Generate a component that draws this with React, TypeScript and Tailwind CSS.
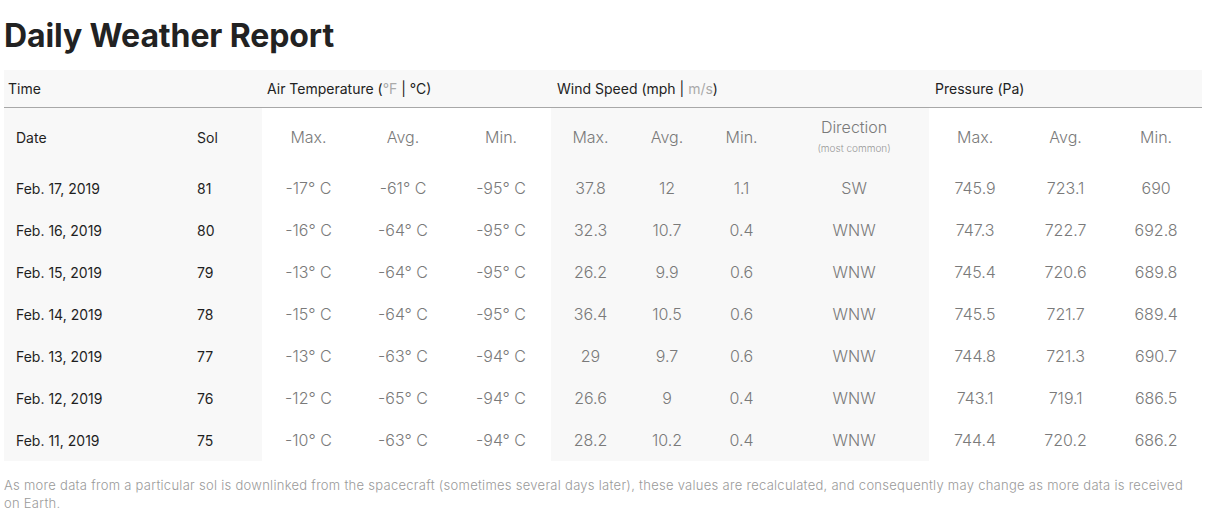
import React from "react";

const rows = [
  ["Feb. 17, 2019", "81", "-17", "-61", "-95", "37.8", "12", "1.1", "SW", "745.9", "723.1", "690"],
  ["Feb. 16, 2019", "80", "-16", "-64", "-95", "32.3", "10.7", "0.4", "WNW", "747.3", "722.7", "692.8"],
  ["Feb. 15, 2019", "79", "-13", "-64", "-95", "26.2", "9.9", "0.6", "WNW", "745.4", "720.6", "689.8"],
  ["Feb. 14, 2019", "78", "-15", "-64", "-95", "36.4", "10.5", "0.6", "WNW", "745.5", "721.7", "689.4"],
  ["Feb. 13, 2019", "77", "-13", "-63", "-94", "29", "9.7", "0.6", "WNW", "744.8", "721.3", "690.7"],
  ["Feb. 12, 2019", "76", "-12", "-65", "-94", "26.6", "9", "0.4", "WNW", "743.1", "719.1", "686.5"],
  ["Feb. 11, 2019", "75", "-10", "-63", "-94", "28.2", "10.2", "0.4", "WNW", "744.4", "720.2", "686.2"],
];

const gray = "bg-[#f8f8f8]";
const val = "text-center font-light text-[16px] text-[#7a7a7a]";
const lab = "pl-[12px] text-[14px] font-normal text-[#1f1f1f]";

export default function App() {
  return (
    <div className="w-[1205px] h-[532px] bg-white px-1 pt-[14px] text-[#222]" style={{ fontFamily: "Inter, 'Noto Sans', sans-serif" }}>
      <h1 className="text-[32px] leading-[44px] font-bold tracking-[-0.1px] text-[#222] mb-[12px]">Daily Weather Report</h1>
      <table className="w-[1198px] table-fixed border-collapse">
        <colgroup>
          <col className="w-[181px]" />
          <col className="w-[77px]" />
          <col className="w-[93px]" />
          <col className="w-[96px]" />
          <col className="w-[100px]" />
          <col className="w-[79px]" />
          <col className="w-[74px]" />
          <col className="w-[75px]" />
          <col className="w-[150px]" />
          <col className="w-[92px]" />
          <col className="w-[89px]" />
          <col className="w-[92px]" />
        </colgroup>
        <thead>
          <tr className={`${gray} h-[37px] border-b border-[#a8a8a8] text-[14px] text-[#222]`}>
            <th colSpan={2} className="text-left font-normal pl-[4px]">Time</th>
            <th colSpan={3} className="text-left font-normal pl-[5px]">
              Air Temperature (<span className="text-[#aaa]">°F</span> | °C)
            </th>
            <th colSpan={4} className="text-left font-normal pl-[6px]">
              Wind Speed (mph | <span className="text-[#aaa]">m/s</span>)
            </th>
            <th colSpan={3} className="text-left font-normal pl-[6px]">Pressure (Pa)</th>
          </tr>
        </thead>
        <tbody>
          <tr className="h-[60px]">
            <td className={`${gray} ${lab}`}>Date</td>
            <td className={`${gray} ${lab}`}>Sol</td>
            <td className={val}>Max.</td>
            <td className={val}>Avg.</td>
            <td className={val}>Min.</td>
            <td className={`${gray} ${val}`}>Max.</td>
            <td className={`${gray} ${val}`}>Avg.</td>
            <td className={`${gray} ${val}`}>Min.</td>
            <td className={`${gray} text-center font-light text-[#7a7a7a]`}>
              <div className="text-[16px] leading-[20px] mt-[2px]">Direction</div>
              <div className="text-[10px] leading-[22px] text-[#999]">(most common)</div>
            </td>
            <td className={val}>Max.</td>
            <td className={val}>Avg.</td>
            <td className={val}>Min.</td>
          </tr>
          {rows.map((r) => (
            <tr key={r[0]} className="h-[42px]">
              <td className={`${gray} ${lab}`}>{r[0]}</td>
              <td className={`${gray} ${lab}`}>{r[1]}</td>
              <td className={val}>{r[2]}° C</td>
              <td className={val}>{r[3]}° C</td>
              <td className={val}>{r[4]}° C</td>
              <td className={`${gray} ${val}`}>{r[5]}</td>
              <td className={`${gray} ${val}`}>{r[6]}</td>
              <td className={`${gray} ${val}`}>{r[7]}</td>
              <td className={`${gray} ${val}`}>{r[8]}</td>
              <td className={val}>{r[9]}</td>
              <td className={val}>{r[10]}</td>
              <td className={val}>{r[11]}</td>
            </tr>
          ))}
        </tbody>
      </table>
      <p className="mt-[15px] text-[13px] leading-[18px] font-light tracking-[0.28px] text-[#9a9a9a] w-[1190px]">
        As more data from a particular sol is downlinked from the spacecraft (sometimes several days later), these values are recalculated, and consequently may change as more data is received on Earth.
      </p>
    </div>
  );
}
